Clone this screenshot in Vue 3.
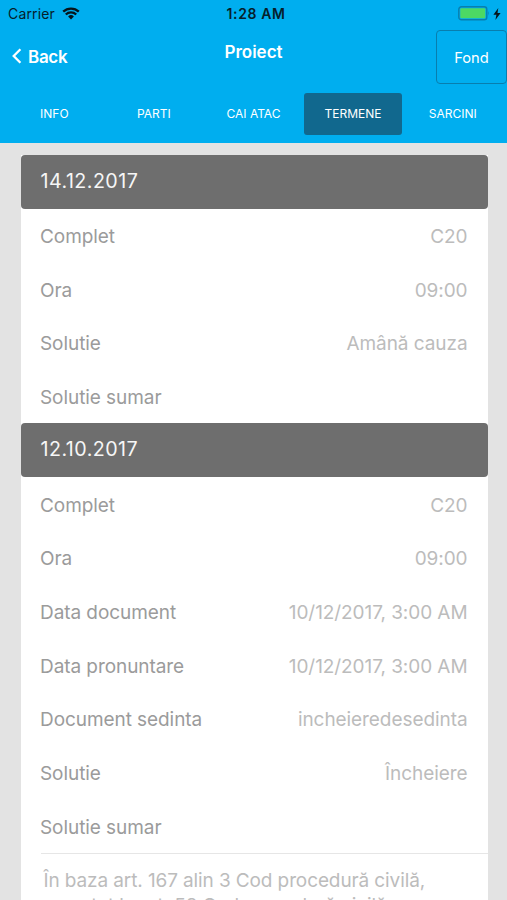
<script setup>
import { ref } from 'vue';

const tabs = ['INFO', 'PARTI', 'CAI ATAC', 'TERMENE', 'SARCINI'];
const activeTab = ref('TERMENE');

const termene = [
  {
    date: '14.12.2017',
    rows: [
      { label: 'Complet', value: 'C20' },
      { label: 'Ora', value: '09:00' },
      { label: 'Solutie', value: 'Amână cauza' },
      { label: 'Solutie sumar', value: '' },
    ],
  },
  {
    date: '12.10.2017',
    rows: [
      { label: 'Complet', value: 'C20' },
      { label: 'Ora', value: '09:00' },
      { label: 'Data document', value: '10/12/2017, 3:00 AM' },
      { label: 'Data pronuntare', value: '10/12/2017, 3:00 AM' },
      { label: 'Document sedinta', value: 'incheieredesedinta' },
      { label: 'Solutie', value: 'Încheiere' },
      { label: 'Solutie sumar', value: '' },
    ],
    summary: ['În baza art. 167 alin 3 Cod procedură civilă,', 'raportat la art. 58 Cod procedură civilă'],
  },
];
</script>

<template>
  <div class="screen">
    <header class="header">
      <div class="status-bar">
        <div class="carrier">
          <span class="carrier-name">Carrier</span>
          <svg class="wifi" viewBox="0 0 18 13">
            <path d="M1.2 4.7 A11.2 11.2 0 0 1 16.8 4.7" />
            <path d="M3.8 7.5 A7.4 7.4 0 0 1 14.2 7.5" />
            <path class="wifi-dot" d="M9 12.5 L6.1 9.5 A4.1 4.1 0 0 1 11.9 9.5 Z" />
          </svg>
        </div>
        <span class="clock">1:28 AM</span>
        <div class="power">
          <svg class="battery" viewBox="0 0 32 15">
            <rect x="0.8" y="0.8" width="28" height="13" rx="2.6" fill="none" stroke="#087fae" stroke-width="1.4" />
            <rect x="2.3" y="2.3" width="25" height="10" rx="1" fill="#4cd964" />
            <path d="M30.2 5 Q31.8 7.3 30.2 9.8 Z" fill="#087fae" />
          </svg>
          <svg class="bolt" viewBox="0 0 8 12">
            <path d="M5.3 0 L0.4 6.7 H3.4 L2.4 12 L7.6 4.9 H4.5 Z" fill="#06151c" />
          </svg>
        </div>
      </div>

      <div class="nav-bar">
        <button class="back">
          <svg class="chevron" viewBox="0 0 10 16">
            <path d="M8.4 1.2 L1.7 8 L8.4 14.8" />
          </svg>
          <span>Back</span>
        </button>
        <h1 class="title">Proiect</h1>
        <button class="fond">Fond</button>
      </div>

      <nav class="tabs">
        <button
          v-for="tab in tabs"
          :key="tab"
          class="tab"
          :class="{ active: tab === activeTab }"
          @click="activeTab = tab"
        >
          {{ tab }}
        </button>
      </nav>
    </header>

    <main class="content">
      <section v-for="termen in termene" :key="termen.date" class="termen">
        <h2 class="date">{{ termen.date }}</h2>
        <div v-for="row in termen.rows" :key="row.label" class="row">
          <span class="label">{{ row.label }}</span>
          <span class="value">{{ row.value }}</span>
        </div>
        <div v-if="termen.summary" class="summary">
          <div v-for="line in termen.summary" :key="line">{{ line }}</div>
        </div>
      </section>
    </main>
  </div>
</template>

<style>
body {
  margin: 0;
  overflow: hidden;
}
</style>

<style scoped>
.screen {
  display: flex;
  flex-direction: column;
  box-sizing: border-box;
  width: 100%;
  height: 900px;
  overflow: hidden;
  background-color: #e3e3e3;
  font-family: Inter, 'Liberation Sans', sans-serif;
}

button {
  padding: 0;
  border: none;
  background: none;
  color: white;
  font-family: inherit;
  cursor: pointer;
}

.header {
  flex: none;
  height: 142.5px;
  background-color: #00aeef;
}

.status-bar {
  display: grid;
  grid-template-columns: 1fr auto 1fr;
  align-items: center;
  height: 27px;
  padding: 0 6px 0 8px;
  color: #06202b;
  font-size: 14px;
}

.carrier {
  display: flex;
  align-items: center;
  gap: 7px;
}

.carrier-name {
  letter-spacing: 0.15px;
}

.wifi {
  width: 18px;
  height: 13px;
  fill: none;
  stroke: #06151c;
  stroke-width: 2.3;
}

.wifi .wifi-dot {
  fill: #06151c;
  stroke: none;
}

.clock {
  padding-left: 3px;
  font-weight: 600;
  letter-spacing: 0.6px;
}

.power {
  display: flex;
  align-items: center;
  justify-content: flex-end;
  gap: 3px;
}

.battery {
  width: 32px;
  height: 15px;
}

.bolt {
  width: 8px;
  height: 12px;
}

.nav-bar {
  display: grid;
  grid-template-columns: 1fr auto 1fr;
  height: 60px;
}

.back {
  display: flex;
  align-items: center;
  gap: 6px;
  padding-left: 12px;
  font-size: 17px;
  font-weight: 600;
  letter-spacing: -0.3px;
}

.chevron {
  width: 10px;
  height: 16px;
  margin-top: -2px;
  fill: none;
  stroke: white;
  stroke-width: 2.3;
}

.title {
  margin: 0;
  padding-top: 14px;
  color: white;
  font-size: 17px;
  font-weight: 600;
  line-height: 23px;
}

.fond {
  justify-self: end;
  box-sizing: border-box;
  width: 71px;
  height: 54px;
  margin-top: 3px;
  padding-top: 1px;
  border: 1px solid #087eae;
  border-radius: 4px;
  font-size: 14.7px;
}

.tabs {
  display: flex;
  gap: 1px;
  padding: 6px 5px 0;
}

.tab {
  flex: 1;
  height: 42px;
  padding: 0 0 2px;
  border-radius: 3px;
  font-size: 12px;
}

.tab.active {
  background-color: #11688e;
}

.content {
  flex: none;
  margin: 12px 19.5px 0 20.5px;
  background-color: white;
}

.date {
  box-sizing: border-box;
  height: 54px;
  margin: 0;
  padding-left: 20px;
  border-radius: 4px;
  background-color: #6e6e6e;
  color: #f6f6f6;
  font-size: 19.7px;
  font-weight: 400;
  letter-spacing: 0.45px;
  line-height: 52px;
}

.row {
  display: flex;
  align-items: center;
  justify-content: space-between;
  box-sizing: border-box;
  height: 53.7px;
  padding: 2px 20px 0 19.5px;
  font-size: 19px;
  letter-spacing: -0.07px;
}

.label {
  color: #9b9b9b;
}

.value {
  color: #bcbcbc;
}

.summary {
  margin-left: 20px;
  padding: 14px 0 0 3px;
  border-top: 1px solid #e6e6e6;
  color: #bcbcbc;
  font-size: 19px;
  letter-spacing: -0.11px;
  line-height: 25px;
}
</style>
